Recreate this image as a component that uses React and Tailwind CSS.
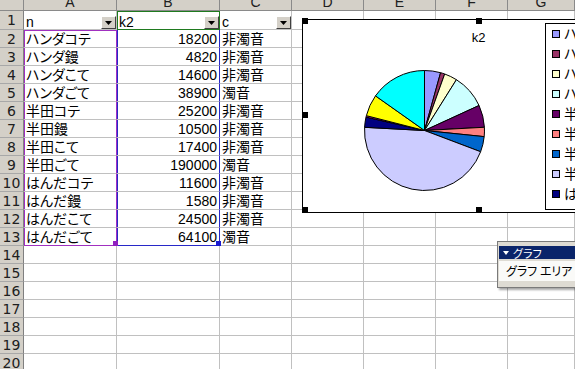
import React from 'react';

const data = [
  ['ハンダコテ', 18200, '非濁音'],
  ['ハンダ鏝', 4820, '非濁音'],
  ['ハンダこて', 14600, '非濁音'],
  ['ハンダごて', 38900, '濁音'],
  ['半田コテ', 25200, '非濁音'],
  ['半田鏝', 10500, '非濁音'],
  ['半田こて', 17400, '非濁音'],
  ['半田ごて', 190000, '濁音'],
  ['はんだコテ', 11600, '非濁音'],
  ['はんだ鏝', 1580, '非濁音'],
  ['はんだこて', 24500, '非濁音'],
  ['はんだごて', 64100, '濁音'],
];

// Excel default series fill colours
const colors = [
  '#9999ff', '#993366', '#ffffcc', '#ccffff', '#660066', '#ff8080',
  '#0066cc', '#ccccff', '#000080', '#ff00ff', '#ffff00', '#00ffff',
];

const cols = ['A', 'B', 'C', 'D', 'E', 'F', 'G'];
const plain = 'border-r border-b border-r-[#c0c0c0] border-b-[#c0c0c0]';

// range highlight borders (categories purple, values blue, name green)
const aBorder = (r) => {
  if (r === 2) return 'border-r border-b border-r-[#a030c0] border-b-[#c0c0c0] shadow-[inset_1px_1px_0_#a030c0]';
  if (r === 13) return 'border-r border-b border-r-[#a030c0] border-b-[#a030c0] shadow-[inset_1px_0_0_#a030c0]';
  if (r > 2 && r < 13) return 'border-r border-b border-r-[#a030c0] border-b-[#c0c0c0] shadow-[inset_1px_0_0_#a030c0]';
  return plain;
};

const bBorder = (r) => {
  if (r === 1) return 'border-r border-b border-r-[#1f7a1f] border-b-[#1f7a1f] shadow-[inset_1px_1px_0_#1f7a1f]';
  if (r === 2) return 'border-r border-b border-r-[#2828c8] border-b-[#c0c0c0] shadow-[inset_1px_0_0_#2828c8]';
  if (r === 13) return 'border-r border-b border-r-[#2828c8] border-b-[#2828c8] shadow-[inset_1px_0_0_#2828c8]';
  if (r > 2 && r < 13) return 'border-r border-b border-r-[#2828c8] border-b-[#c0c0c0] shadow-[inset_1px_0_0_#2828c8]';
  return plain;
};

const FilterButton = () => (
  <div className="self-end flex items-center justify-center w-[15px] h-[13px] shrink-0 bg-[#d4d0c8] border border-t-white border-l-white border-r-[#404040] border-b-[#404040]">
    <svg width="7" height="4" viewBox="0 0 7 4">
      <path d="M0 0h7L3.5 4z" fill="#000" />
    </svg>
  </div>
);

const Cell = ({ r, c }) => {
  let border = plain;
  if (c === 0) border = aBorder(r);
  if (c === 1) border = bBorder(r);

  let content = null;
  if (r === 1 && c < 3) {
    content = (
      <>
        <span className="flex-1 self-end pl-[2px] leading-[14px]">{['n', 'k2', 'c'][c]}</span>
        <FilterButton />
      </>
    );
  } else if (r >= 2 && r <= 13 && c < 3) {
    const row = data[r - 2];
    if (c === 0) content = <span className="pl-[2px] leading-[14px] [font-feature-settings:'palt']">{row[0]}</span>;
    if (c === 1) content = <span className="w-full text-right pr-[2px] leading-[14px]">{row[1]}</span>;
    if (c === 2) content = <span className="pl-[2px] leading-[14px]">{row[2]}</span>;
  }

  return (
    <div className={`relative flex items-center whitespace-nowrap ${border}`}>
      {content}
      {r === 13 && c === 0 && <div className="absolute z-10 -right-[2px] -bottom-[1px] w-[5px] h-[5px] bg-[#9020c0]" />}
      {r === 13 && c === 1 && <div className="absolute z-10 -right-[2px] -bottom-[1px] w-[5px] h-[5px] bg-[#1a1ad0]" />}
    </div>
  );
};

const Pie = () => {
  const total = data.reduce((s, d) => s + d[1], 0);
  const cx = 121.5;
  const cy = 110.5;
  const R = 60;
  let acc = 0;
  return (
    <svg className="absolute inset-0" width="351" height="192">
      {data.map((d, i) => {
        const a0 = (acc / total) * Math.PI * 2 - Math.PI / 2;
        acc += d[1];
        const a1 = (acc / total) * Math.PI * 2 - Math.PI / 2;
        const x0 = cx + R * Math.cos(a0);
        const y0 = cy + R * Math.sin(a0);
        const x1 = cx + R * Math.cos(a1);
        const y1 = cy + R * Math.sin(a1);
        const large = a1 - a0 > Math.PI ? 1 : 0;
        return (
          <path
            key={i}
            d={`M${cx} ${cy}L${x0} ${y0}A${R} ${R} 0 ${large} 1 ${x1} ${y1}Z`}
            fill={colors[i]}
            stroke="#000"
            strokeWidth="1"
            strokeLinejoin="round"
          />
        );
      })}
    </svg>
  );
};

const Handle = ({ className }) => <div className={`absolute w-[6px] h-[6px] bg-black ${className}`} />;

const Chart = () => (
  <div className="absolute left-[302px] top-[19px] w-[353px] h-[194px] border border-black bg-white">
    <div className="absolute top-[10px] left-0 right-0 text-center text-[13px] leading-[15px]">k2</div>
    <Pie />
    <div className="absolute left-[242px] top-[3px] w-[120px] h-[187px] border border-black bg-white flex flex-col text-[14px]">
      {data.slice(0, 9).map((d, i) => (
        <div key={i} className="h-[20px] flex items-center gap-[4px] pl-[6px] shrink-0 whitespace-nowrap">
          <div className="w-[8px] h-[8px] border border-black shrink-0" style={{ backgroundColor: colors[i] }} />
          <span className="leading-[14px] [font-feature-settings:'palt']">{d[0]}</span>
        </div>
      ))}
    </div>
    <Handle className="-left-[1px] -top-[2px]" />
    <Handle className="left-[173px] -top-[2px]" />
    <Handle className="-left-[1px] top-[92px]" />
    <Handle className="-left-[1px] top-[187px]" />
    <Handle className="left-[173px] top-[187px]" />
  </div>
);

const ChartToolbar = () => (
  <div className="absolute left-[497px] top-[241px] w-[110px] border border-[#7a7a7a] bg-[#dedbd3] p-[1px] shadow-[2px_2px_2px_rgba(0,0,0,0.35)] font-['Noto_Sans_CJK_JP',sans-serif]">
    <div className="mt-[3px] h-[13px] bg-[#0a246a] text-white flex items-center gap-[4px] pl-[4px]">
      <svg width="6" height="4" viewBox="0 0 6 4">
        <path d="M0 0h6L3 4z" fill="#fff" />
      </svg>
      <span className="text-[11px] leading-[12px] [font-feature-settings:'palt']">グラフ</span>
    </div>
    <div className="mt-[2px] h-[20px] bg-[#fafaf8] flex items-center pl-[7px]">
      <span className="text-[12px] leading-[14px] [font-feature-settings:'palt']">グラフ エリア</span>
    </div>
    <div className="h-[5px]" />
  </div>
);

export default function App() {
  const rows = Array.from({ length: 20 }, (_, i) => i + 1);
  return (
    <div className="relative w-[575px] h-[369px] overflow-hidden bg-white text-black text-[14px] font-['Liberation_Sans','Noto_Sans_CJK_JP',sans-serif]">
      <div className="grid grid-cols-[24px_93px_103px_72px_72px_72px_72px_1fr] grid-rows-[11px_19px] auto-rows-[18px]">
        <div className="bg-[#d4d0c8] border-r border-b border-[#8a8a8a]" />
        {cols.map((c) => (
          <div key={c} className="bg-[#d4d0c8] border-r border-b border-[#8a8a8a] flex items-end justify-center overflow-hidden">
            <span className="leading-[16px] shrink-0 text-[#202020]">{c}</span>
          </div>
        ))}
        {rows.map((r) => (
          <React.Fragment key={r}>
            <div className="bg-[#d4d0c8] border-r border-b border-r-[#808080] border-b-[#a8a8a8] flex items-center justify-center font-['DejaVu_Sans',sans-serif] text-[14px] text-[#202020] leading-[14px]">
              {r}
            </div>
            {cols.map((c, ci) => (
              <Cell key={c} r={r} c={ci} />
            ))}
          </React.Fragment>
        ))}
      </div>
      <Chart />
      <ChartToolbar />
    </div>
  );
}
